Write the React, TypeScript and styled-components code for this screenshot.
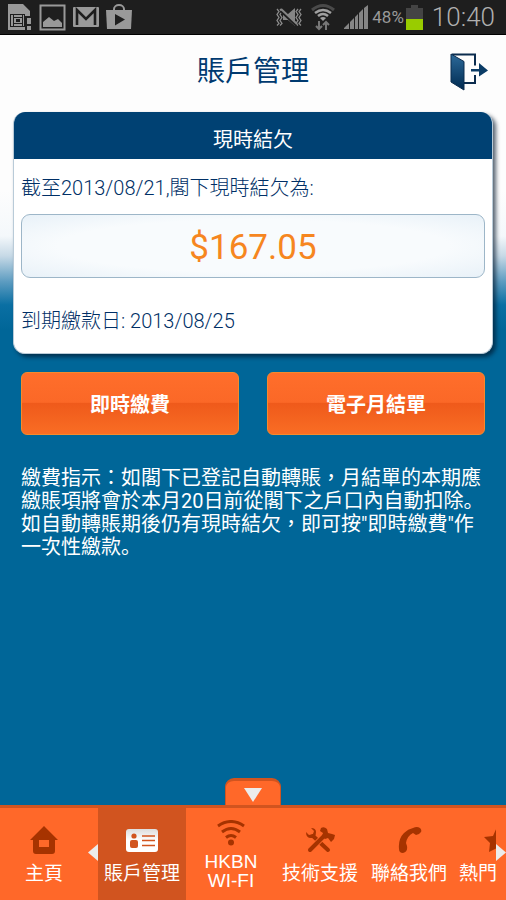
import React from "react";
import styled, { createGlobalStyle } from "styled-components";

const GlobalStyle = createGlobalStyle`
  *, *::before, *::after { box-sizing: border-box; }
  body {
    margin: 0;
    font-family: Roboto, "Noto Sans CJK TC", sans-serif;
    font-size: 20px;
    line-height: 23px;
  }
`;

const Screen = styled.div`
  display: flex;
  flex-direction: column;
  min-height: 100vh;
  background: linear-gradient(
    #fdfdfd 0, #fdfdfd 190px, #f4f8fb 236px, #c6d9e6 256px,
    #5b9bc0 282px, #0a6fa3 305px, #006698 330px, #006698 100%
  );
`;

const StatusBar = styled.div`
  display: flex;
  align-items: center;
  justify-content: space-between;
  height: 35px;
  padding: 0 11px 0 6px;
  background: #1e1e1e;
  border-bottom: 1px solid #000;
  color: #999;
`;

const StatusGroup = styled.div<{ $gap: number }>`
  display: flex;
  align-items: center;
  gap: ${(p) => p.$gap}px;
`;

const Percent = styled.span`
  font-size: 17px;
  margin: 0 -7px 0 -5px;
`;

const Clock = styled.time`
  font-size: 26px;
  line-height: 34px;
  font-weight: 300;
  color: #b0b0b0;
`;

const Header = styled.header`
  display: grid;
  grid-template-columns: 40px 1fr 40px;
  align-items: center;
  height: 70px;
  padding: 3px 16px 0;
`;

const Title = styled.h1`
  grid-column: 2;
  margin: 0;
  text-align: center;
  font-size: 28px;
  line-height: 36px;
  font-weight: 400;
  color: #003a70;
`;

const IconButton = styled.button`
  display: flex;
  padding: 0;
  border: 0;
  background: none;
  cursor: pointer;
`;

const Main = styled.main`
  flex: 1;
  padding: 7px 13px 0;
`;

const Card = styled.section`
  border-radius: 12px;
  overflow: hidden;
  background: #fff;
  border: solid #b9cbd8;
  border-width: 0 1px 1px;
  box-shadow: 3px 3px 4px rgba(0, 20, 40, 0.65);
`;

const CardTitle = styled.h2`
  margin: 0;
  height: 47px;
  padding-top: 5px;
  text-align: center;
  font-size: 20px;
  line-height: 46px;
  font-weight: 400;
  color: #fff;
  background: #004173;
`;

const CardBody = styled.div`
  padding: 18px 7px 20px;
`;

const CardText = styled.p`
  margin: 0;
  font-weight: 300;
  color: #002f66;
`;

const Amount = styled.p`
  display: flex;
  align-items: center;
  justify-content: center;
  height: 64px;
  margin: 14px 0 32px;
  padding-top: 2px;
  border: 1px solid #9db6c8;
  border-radius: 9px;
  background: radial-gradient(ellipse at center, #f8fbfd 60%, #e8f1f8 100%);
  font-size: 35px;
  color: #f6861f;
`;

const Actions = styled.div`
  display: grid;
  grid-template-columns: 1fr 1fr;
  gap: 28px;
  padding: 18px 8px 0;
`;

const ActionButton = styled.button`
  height: 63px;
  padding: 3px 0 0;
  border: 1px solid #f58a2c;
  border-radius: 6px;
  background: linear-gradient(#ff6e2b 0, #fb6827 48%, #ef5a1b 50%, #f96d24 100%);
  font: inherit;
  font-weight: 700;
  color: #fff;
  cursor: pointer;
`;

const Note = styled.p`
  margin: 32px 7px 0 8px;
  color: #fff;
`;

const Stop = styled.span`
  font-family: "Noto Sans CJK JP", sans-serif;
  line-height: 1;
`;

const Footer = styled.footer`
  display: flex;
  flex-direction: column;
  align-items: center;
`;

const PullTab = styled.button`
  display: flex;
  align-items: center;
  justify-content: center;
  width: 56px;
  height: 27px;
  padding: 4px 0 0;
  border: solid #d1541f;
  border-width: 3px 1px 0;
  border-radius: 9px 9px 0 0;
  background: #ff6829;
  cursor: pointer;
`;

const Nav = styled.nav`
  display: flex;
  width: 100%;
  height: 95px;
  border-top: 3px solid #d1541f;
  background: #ff6829;
`;

const HomeCell = styled.div`
  flex: none;
  display: flex;
  align-items: center;
  width: 98px;
`;

const Strip = styled.div`
  flex: 1;
  min-width: 0;
  display: flex;
  gap: 1px;
  overflow: hidden;
`;

const NavItem = styled.a<{ $active?: boolean; $edge?: boolean }>`
  flex: 0 0 88px;
  display: flex;
  flex-direction: column;
  align-items: ${(p) => (p.$edge ? "flex-start" : "center")};
  height: 92px;
  padding: 12px ${(p) => (p.$edge ? 5 : 0)}px 0;
  background: ${(p) => (p.$active ? "#d1541f" : "transparent")};
  font-size: 19px;
  line-height: 20px;
  text-align: center;
  text-decoration: none;
  white-space: nowrap;
  color: #fff;
`;

const NavIcon = styled.span<{ $edge?: boolean; $short?: boolean }>`
  display: flex;
  align-items: center;
  justify-content: center;
  width: ${(p) => (p.$edge ? 76 : 40)}px;
  height: ${(p) => (p.$short ? 26 : 40)}px;
  margin-bottom: ${(p) => (p.$short ? 6 : 4)}px;
`;

const Latin = styled.span`
  font-family: "Liberation Sans", sans-serif;
  line-height: 19px;
`;

const ScrollButton = styled(IconButton)`
  flex: none;
  align-self: center;
  width: 10px;
  margin-bottom: 4px;
`;

const dark = "#a63300";

const SimIcon = () => (
  <svg width="26" height="28" viewBox="0 0 26 28">
    <path d="M2 1h15l7 7v5h-5v14H2z" fill="#999" />
    <rect x="4" y="11" width="15" height="13" fill="#1e1e1e" />
    <path d="M5 12h2v11H5zM8 12h8v2H8zM8 21h8v2H8zM8 15h8v5H8zM17 12h1v11h-1z" fill="#999" />
    <rect x="10" y="16" width="4" height="3" fill="#1e1e1e" />
    <path d="M21 15h4v6h-4zM21 23h4v4h-4z" fill="#999" />
  </svg>
);
const PhotoIcon = () => (
  <svg width="27" height="27" viewBox="0 0 27 27">
    <rect x="1.5" y="1.5" width="24" height="24" fill="none" stroke="#999" strokeWidth="2" />
    <path d="M4 23v-5l6-5 5 4 4-2 4 4v4z" fill="#999" />
  </svg>
);
const MailIcon = () => (
  <svg width="26" height="20" viewBox="0 0 26 20">
    <rect width="26" height="20" rx="1" fill="#999" />
    <path d="M4 18V3l9 9 9-9v15" fill="none" stroke="#1e1e1e" strokeWidth="2.6" />
  </svg>
);
const StoreIcon = () => (
  <svg width="26" height="26" viewBox="0 0 26 26">
    <path d="M8 7V5a5 4 0 0 1 10 0v2" fill="none" stroke="#999" strokeWidth="2" />
    <path d="M0 6h26l-1 19H1z" fill="#999" />
    <path d="M9 10l10 5.500-10 6z" fill="#1e1e1e" />
  </svg>
);
const MuteIcon = () => (
  <svg width="26" height="20" viewBox="0 0 26 20">
    <path
      d="M1 2l2 2.500-2 3 2 3-2 3 2 3-2 2M4 2l2 2.500-2 3 2 3-2 3 2 3-2 2M22 2l-2 2.500 2 3-2 3 2 3-2 3 2 2M25 2l-2 2.500 2 3-2 3 2 3-2 3 2 2"
      fill="none"
      stroke="#8c8c8c"
      strokeWidth="1.300"
    />
    <path d="M7 7h5l7-6v18l-7-6H7z" fill="#858585" />
    <path d="M5 4l15 14" stroke="#1e1e1e" strokeWidth="3" />
    <path d="M5 2l16 15" stroke="#858585" strokeWidth="2" />
  </svg>
);
const SignalWifiIcon = () => (
  <svg width="24" height="28" viewBox="0 0 24 28">
    <path d="M1 7q11-9 22 0" fill="none" stroke="#4a4a4a" strokeWidth="3" />
    <path d="M4 10q8-6 16 0M7 13q5-4 10 0" fill="none" stroke="#a0a0a0" strokeWidth="2.500" />
    <path d="M9 15q3-2 6 0l-3 3z" fill="#a0a0a0" />
    <path d="M8 18v8M5 23l3 3 3-3M15 27v-8M12 22l3-3 3 3" fill="none" stroke="#777" strokeWidth="2" />
  </svg>
);
const SignalIcon = () => (
  <svg width="24" height="24" viewBox="0 0 24 24">
    <path d="M0 24v-1l5-5v6zM6 24v-7l4-4v11zM11 24V12l3-3v15zM15 24V8l4-4v20zM20 24V3l4-3v24z" fill="#858585" />
  </svg>
);
const BatteryIcon = () => (
  <svg width="17" height="25" viewBox="0 0 17 25">
    <path d="M5 0h7v3h5v11H0V3h5z" fill="#444" />
    <path d="M0 14h17v11H0z" fill="#99cc00" />
  </svg>
);
const ExitIcon = () => (
  <svg width="38" height="38" viewBox="0 0 38 38">
    <defs>
      <linearGradient id="door" x1="0" y1="0" x2="0" y2="1">
        <stop offset="0" stopColor="#2c6a9a" />
        <stop offset="1" stopColor="#002a50" />
      </linearGradient>
    </defs>
    <path d="M2 1.500h23v11M25 22v8H14" fill="none" stroke="#0b2c4e" strokeWidth="2" />
    <path d="M1 1l13 7.500V37L1 29z" fill="url(#door)" stroke="#0b2c4e" />
    <path d="M21 16h8v-6l9 7.500-9 6V18.500h-8z" fill="#0b3c66" />
  </svg>
);
const HomeIcon = () => (
  <svg width="28" height="28" viewBox="0 0 28 28">
    <path d="M14 0l14 14h-3v11q0 3-3 3H6q-3 0-3-3V14H0z" fill={dark} />
    <path d="M9 14h10v7H9z" fill="#ff6829" />
  </svg>
);
const CardIcon = () => (
  <svg width="32" height="23" viewBox="0 0 32 23">
    <defs>
      <linearGradient id="idcard" x1="0" y1="0" x2="0" y2="1">
        <stop offset="0" stopColor="#ddd" />
        <stop offset=".5" stopColor="#fff" />
      </linearGradient>
    </defs>
    <rect width="32" height="23" rx="3" fill="url(#idcard)" />
    <circle cx="8" cy="7" r="2.600" fill="#d1541f" />
    <rect x="4" y="11" width="8" height="8" rx="2" fill="#d1541f" />
    <path d="M16 7h13M16 11.500h13M16 16.500h13" stroke="#d1541f" strokeWidth="1.500" />
  </svg>
);
const WifiIcon = () => (
  <svg width="28" height="26" viewBox="0 0 28 26">
    <path d="M1 6q13-9 26 0M5 12q9-7 18 0M9 17.500q5-4 10 0" fill="none" stroke={dark} strokeWidth="3" />
    <circle cx="14" cy="22.500" r="3" fill={dark} />
  </svg>
);
const ToolsIcon = () => (
  <svg width="30" height="26" viewBox="0 0 30 26">
    <path d="M8 9l15 14" stroke={dark} strokeWidth="4" strokeLinecap="round" />
    <path d="M1 5l3 3 4-1 1-3-3-3Q11 1 11 5q0 6-5 6-5 0-5-6z" fill={dark} />
    <path d="M5 23L20 8" stroke="#ff6829" strokeWidth="6" />
    <path d="M5 23L20 8" stroke={dark} strokeWidth="4" strokeLinecap="round" />
    <path d="M16 1q3-2 6 1l1 4 4 1 3 1-1 4-3 3-3-4-3 1-3-3 1-3-3-2z" fill={dark} />
  </svg>
);
const PhoneIcon = () => (
  <svg width="26" height="26" viewBox="0 0 26 26">
    <path
      d="M17 1q4-2 7 0 2 2 1 4-2 3-5 3l-3-2q-6 3-7 10l1 3q1 6-4 7-4 0-4-4Q2 12 8 6q4-4 9-5z"
      fill={dark}
    />
  </svg>
);
const StarIcon = () => (
  <svg width="26" height="26" viewBox="0 0 26 26">
    <path d="M13 0l4 9 9 1-7 6 2 9-8-4-8 4 1-9-6-6 9-1z" fill={dark} />
  </svg>
);
const Arrow = ({ d, w, h }: { d: string; w: number; h: number }) => (
  <svg width={w} height={h} viewBox={`0 0 ${w} ${h}`}>
    <path d={d} fill="#ececec" />
  </svg>
);

export default function App() {
  return (
    <>
      <GlobalStyle />
      <Screen>
        <StatusBar>
          <StatusGroup $gap={7}>
            <SimIcon />
            <PhotoIcon />
            <MailIcon />
            <StoreIcon />
          </StatusGroup>
          <StatusGroup $gap={9}>
            <MuteIcon />
            <SignalWifiIcon />
            <SignalIcon />
            <Percent>48%</Percent>
            <BatteryIcon />
            <Clock>10:40</Clock>
          </StatusGroup>
        </StatusBar>
        <Header>
          <Title>賬戶管理</Title>
          <IconButton type="button" aria-label="登出"><ExitIcon /></IconButton>
        </Header>
        <Main>
          <Card>
            <CardTitle>現時結欠</CardTitle>
            <CardBody>
              <CardText>截至2013/08/21,閣下現時結欠為:</CardText>
              <Amount>$167.05</Amount>
              <CardText>到期繳款日: 2013/08/25</CardText>
            </CardBody>
          </Card>
          <Actions>
            <ActionButton type="button">即時繳費</ActionButton>
            <ActionButton type="button">電子月結單</ActionButton>
          </Actions>
          <Note>
            {"繳費指示\uFF1A如閣下已登記自動轉賬\uFF0C月結單的本期應繳賬項將會於本月20日前從閣下之戶口內自動扣除"}
            <Stop>。</Stop>
            {"如自動轉賬期後仍有現時結欠\uFF0C即可按\"即時繳費\"作一次性繳款"}
            <Stop>。</Stop>
          </Note>
        </Main>
        <Footer>
          <PullTab type="button" aria-label="收起">
            <Arrow d="M0 0h18L9 14z" w={18} h={14} />
          </PullTab>
          <Nav>
            <HomeCell>
              <NavItem href="#home">
                <NavIcon><HomeIcon /></NavIcon>
                主頁
              </NavItem>
              <ScrollButton type="button" aria-label="上一頁">
                <Arrow d="M10 0v17L0 8.500z" w={10} h={17} />
              </ScrollButton>
            </HomeCell>
            <Strip>
              <NavItem href="#account" $active>
                <NavIcon><CardIcon /></NavIcon>
                賬戶管理
              </NavItem>
              <NavItem href="#wifi">
                <NavIcon $short><WifiIcon /></NavIcon>
                <Latin>HKBN<br />WI-FI</Latin>
              </NavItem>
              <NavItem href="#support">
                <NavIcon><ToolsIcon /></NavIcon>
                技術支援
              </NavItem>
              <NavItem href="#contact">
                <NavIcon><PhoneIcon /></NavIcon>
                聯絡我們
              </NavItem>
              <NavItem href="#hot" $edge>
                <NavIcon $edge><StarIcon /></NavIcon>
                熱門
              </NavItem>
            </Strip>
            <ScrollButton type="button" aria-label="下一頁">
              <Arrow d="M0 0v17l10-8.500z" w={10} h={17} />
            </ScrollButton>
          </Nav>
        </Footer>
      </Screen>
    </>
  );
}
